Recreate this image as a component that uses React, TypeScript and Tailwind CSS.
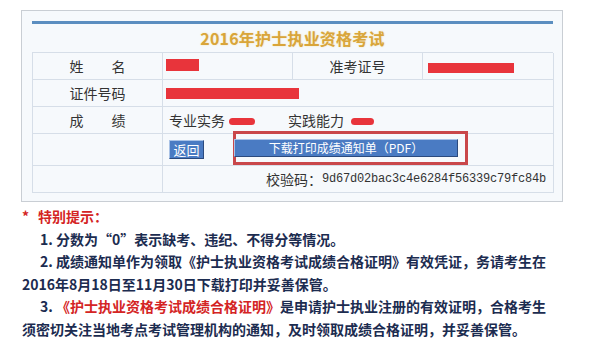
const cjk = '"Noto Sans CJK SC", "Noto Sans", sans-serif';

function Redact({ w, h, className = "" }: { w: number; h: number; className?: string }) {
  return <span className={`inline-block bg-[#e8343b] ${className}`} style={{ width: w, height: h }} />;
}

export default function App() {
  const cell = "border-r border-b border-[#d6dee8] flex items-center";
  return (
    <div className="w-[603px] h-[342px] bg-white overflow-hidden" style={{ fontFamily: cjk }}>
      <div className="ml-[21px] mt-[10px] w-[542px] border border-[#c9ced4] bg-[#f6f9fc] pl-[10px] pr-[9px] pt-[10px] pb-[8px]">
        <div className="h-[3px] bg-[#5b8ec0]" />
        <div
          className="h-[28px] flex items-center justify-center text-[16px] font-bold text-[#d9a53a] tracking-[0.2px]"
          style={{ textShadow: "0 0 2px #f3e3b0" }}
        >
          2016年护士执业资格考试
        </div>
        <div className="grid grid-cols-[130px_130px_130px_131px] border-t border-l border-[#d6dee8] text-[14px] text-[#333]">
          {/* row 1 */}
          <div className={`${cell} h-[27px] justify-center`}>姓　　名</div>
          <div className={`${cell} h-[27px] pl-[3px]`}>
            <Redact w={33} h={12} className="-mt-[2px]" />
          </div>
          <div className={`${cell} h-[27px] justify-center`}>准考证号</div>
          <div className={`${cell} h-[27px] pl-[5px]`}>
            <Redact w={86} h={10} className="mt-[3px]" />
          </div>
          {/* row 2 */}
          <div className={`${cell} h-[27px] justify-center`}>证件号码</div>
          <div className={`${cell} h-[27px] pl-[3px] col-span-3`}>
            <Redact w={133} h={11} className="mt-[1px]" />
          </div>
          {/* row 3 */}
          <div className={`${cell} h-[27px] justify-center`}>成　　绩</div>
          <div className={`${cell} h-[27px] pl-[6px] col-span-3`}>
            <span>专业实务</span>
            <Redact w={26} h={7} className="ml-[4px] mt-[2px] rounded-full" />
            <span className="ml-[33px]">实践能力</span>
            <Redact w={23} h={7} className="ml-[7px] mt-[2px] rounded-full" />
          </div>
          {/* row 4 */}
          <div className={`${cell} h-[32px]`} />
          <div className={`${cell} h-[32px] pl-[6px] col-span-3`}>
            <button className="h-[19px] w-[35px] bg-[#4a7bc3] text-white text-[13px] leading-none border border-t-[#a9c2e6] border-l-[#a9c2e6] border-b-[#2b4a7e] border-r-[#2b4a7e]">
              返回
            </button>
            <div className="ml-[29px] -mt-[4px] h-[34px] border-[3px] border-[#c9474a] flex items-center pr-[7px]">
              <button className="-ml-[2px] h-[18px] w-[224px] bg-[#4a7bc3] text-white text-[12px] leading-none border border-t-[#a9c2e6] border-l-[#a9c2e6] border-b-[#2b4a7e] border-r-[#2b4a7e]">
                下载打印成绩通知单（PDF）
              </button>
            </div>
          </div>
          {/* row 5 */}
          <div className={`${cell} h-[27px]`} />
          <div className={`${cell} h-[27px] col-span-3 pl-[103px]`}>
            <span>校验码：</span>
            <span className="text-[12px] tracking-[-0.2px]" style={{ fontFamily: '"Liberation Mono", "Courier New", monospace' }}>
              9d67d02bac3c4e6284f56339c79fc84b
            </span>
          </div>
        </div>
      </div>

      <div className="pl-[22px] mt-[3px] text-[14px] leading-[22.5px] font-semibold text-[#1c2c50] whitespace-nowrap">
        <div className="text-[#d42424] font-bold">
          <span className="inline-block w-[16px]">*</span>特别提示：
        </div>
        <div className="pl-[18px]">1. 分数为“0”表示缺考、违纪、不得分等情况。</div>
        <div className="pl-[18px]">2. 成绩通知单作为领取《护士执业资格考试成绩合格证明》有效凭证，务请考生在</div>
        <div>2016年8月18日至11月30日下载打印并妥善保管。</div>
        <div className="pl-[18px]">
          3. <span className="text-[#d42424]">《护士执业资格考试成绩合格证明》</span>是申请护士执业注册的有效证明，合格考生
        </div>
        <div>须密切关注当地考点考试管理机构的通知，及时领取成绩合格证明，并妥善保管。</div>
      </div>
    </div>
  );
}
